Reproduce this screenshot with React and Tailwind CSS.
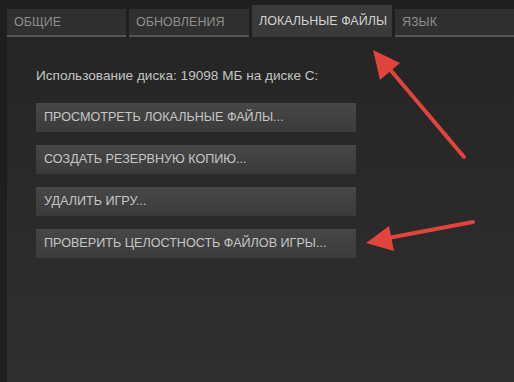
import React from "react";

const tabs = [
  { label: "ОБЩИЕ", w: "w-[119px]", active: false },
  { label: "ОБНОВЛЕНИЯ", w: "w-[120px]", active: false },
  { label: "ЛОКАЛЬНЫЕ ФАЙЛЫ", w: "w-[140px]", active: true },
  { label: "ЯЗЫК", w: "flex-1", active: false },
];

const buttons = [
  "ПРОСМОТРЕТЬ ЛОКАЛЬНЫЕ ФАЙЛЫ...",
  "СОЗДАТЬ РЕЗЕРВНУЮ КОПИЮ...",
  "УДАЛИТЬ ИГРУ...",
  "ПРОВЕРИТЬ ЦЕЛОСТНОСТЬ ФАЙЛОВ ИГРЫ...",
];

export default function App() {
  return (
    <div
      className="relative w-[514px] h-[382px] overflow-hidden bg-[#1f1f1f] flex"
      style={{ fontFamily: '"Liberation Sans", Arial, sans-serif' }}
    >
      <div className="w-[7px] shrink-0 bg-[#1e1e1e]" />
      <div className="flex-1 flex flex-col">
        <div className="h-[6px] bg-[#1f1f1f]" />
        <div className="flex items-end gap-[3px] h-[31px] bg-[#202020]">
          {tabs.map((t) =>
            t.active ? (
              <div
                key={t.label}
                className={`${t.w} h-[32px] -mt-[1px] bg-[#3a3a3a] flex items-center pl-[7px] text-[12.5px] text-[#d4d4d4]`}
              >
                {t.label}
              </div>
            ) : (
              <div key={t.label} className={`${t.w} h-[28px] flex flex-col`}>
                <div className="flex-1 bg-[#303030] flex items-center pl-[7px] text-[12.5px] text-[#8f8f8f]">
                  {t.label}
                </div>
                <div className="h-[2px] bg-[#555555]" />
              </div>
            )
          )}
        </div>
        <div className="flex-1 bg-gradient-to-b from-[#252525] to-[#2f2f2f] pl-[29px] pt-[31px]">
          <div className="text-[13.6px] text-[#c4c4c4] leading-[16px]">
            Использование диска: 19098 МБ на диске C:
          </div>
          <div className="mt-[19px] flex flex-col gap-[13px]">
            {buttons.map((b) => (
              <div
                key={b}
                className="w-[320px] h-[29px] bg-gradient-to-b from-[#474747] to-[#3b3b3b] flex items-center pl-[8px] text-[12.6px] text-[#c6c6c6]"
              >
                {b}
              </div>
            ))}
          </div>
        </div>
      </div>
      <svg
        className="absolute left-0 top-0 pointer-events-none"
        width="514"
        height="382"
        viewBox="0 0 514 382"
      >
        <line x1="464" y1="157" x2="388" y2="67" stroke="#e0443a" strokeWidth="4" strokeLinecap="round" />
        <polygon points="373,50 400,63 380,80" fill="#e0443a" />
        <line x1="473" y1="222" x2="388" y2="238" stroke="#e0443a" strokeWidth="4" strokeLinecap="round" />
        <polygon points="366,243 389,226 394,251" fill="#e0443a" />
      </svg>
    </div>
  );
}
